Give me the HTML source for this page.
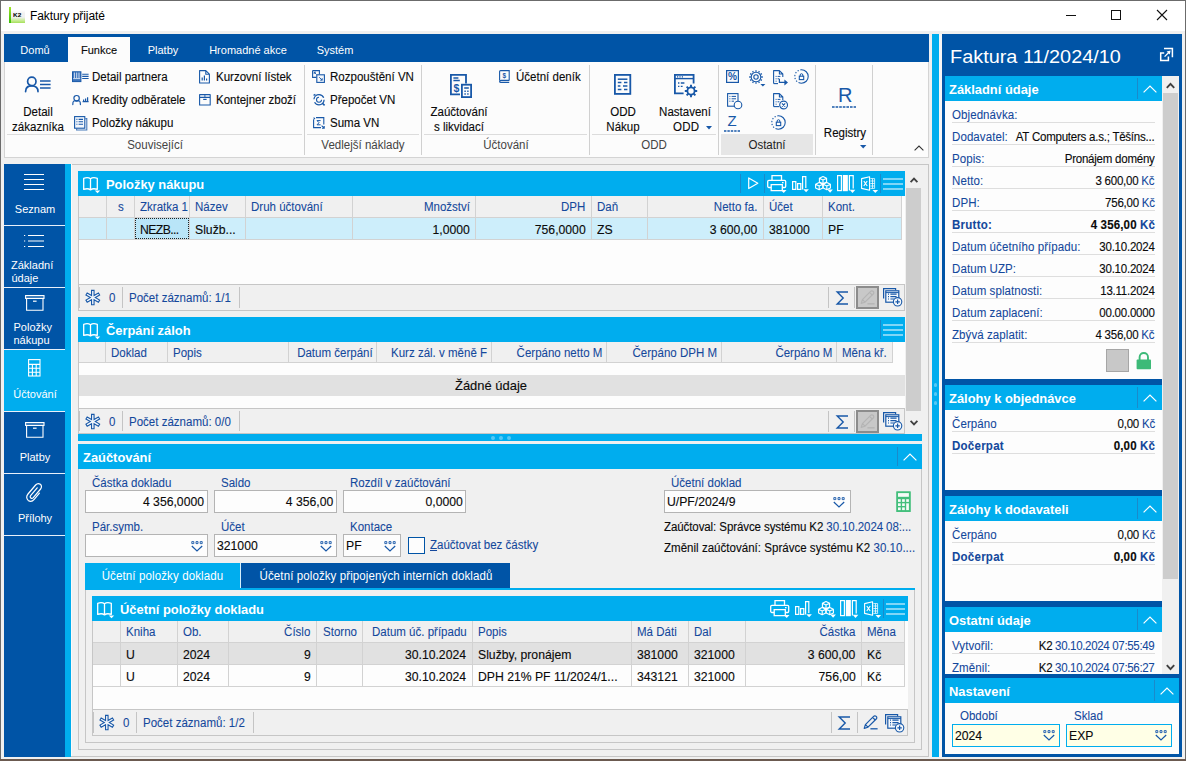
<!DOCTYPE html>
<html lang="cs"><head><meta charset="utf-8"><title>Faktury přijaté</title>
<style>
html,body{margin:0;padding:0;}
body{width:1186px;height:761px;overflow:hidden;background:#f0f0f0;font-family:"Liberation Sans",sans-serif;font-size:12px;color:#111;position:relative;}
div,svg{position:absolute;box-sizing:border-box;}
.t{white-space:nowrap;font-size:12px;transform:scaleX(0.96);transform-origin:left center;}
.t.r{transform-origin:right center;}
.t.c{transform-origin:center center;}
.h12{font-size:12px;}
.t.nv{font-size:11px;transform:none;}
.t.d{font-size:12.4px;transform:scaleX(0.985);}
.t.f{font-size:12.4px;transform:scaleX(0.93);}
.b{color:#14489c;-webkit-text-stroke:0.08px #14489c;}
.w{color:#fff;}
.bold{font-weight:bold;}
.hd{font-size:13.5px;font-weight:bold;color:#fff;transform:scaleX(0.955);margin-top:0.5px;}
.k{color:#0a0a0a;-webkit-text-stroke:0.12px #0a0a0a;}
svg{overflow:visible;}
</style></head><body>
<div style="left:0px;top:0px;width:1186px;height:761px;background:#f0f0f0;"></div>
<div style="left:0px;top:0px;width:1186px;height:1px;background:#6b6b6b;"></div>
<div style="left:0px;top:0px;width:1px;height:761px;background:#6b6b6b;"></div>
<div style="left:1185px;top:0px;width:1px;height:761px;background:#6b6b6b;"></div>
<div style="left:0px;top:759px;width:1186px;height:2px;background:#6b5a50;"></div>
<div style="left:1px;top:1px;width:1184px;height:30px;background:#ffffff;"></div>
<div style="left:11px;top:10px;width:14px;height:13px;background:linear-gradient(180deg,rgba(244,244,244,0) 0%,#f2f2f2 25%,#f0f0f0 55%,#c9ec98 80%,#a6e05a 100%);"></div>
<div style="left:9px;top:7px;width:2.2px;height:16px;background:linear-gradient(180deg,#a2e42c 0%,#62cc14 60%,#3abc0c 100%);"></div>
<div class="t " style="top:11.1px;height:8px;line-height:8px;left:12.7px;font-size:5.5px;font-weight:bold;color:#000;transform:scaleX(1.17);">K2</div>
<div class="t " style="top:7px;height:18px;line-height:18px;left:30px;color:#000;font-size:12px;transform:none;letter-spacing:-0.08px;">Faktury přijaté</div>
<svg style="left:1066px;top:10px;" width="11" height="11" viewBox="0 0 11 11"><path d="M0 5.5H10" stroke="#111" stroke-width="1" fill="none"/></svg>
<svg style="left:1111px;top:10px;" width="11" height="11" viewBox="0 0 11 11"><rect x="0.5" y="0.5" width="9" height="9" stroke="#111" stroke-width="1" fill="none"/></svg>
<svg style="left:1157px;top:10px;" width="11" height="11" viewBox="0 0 11 11"><path d="M0 0L10 10M10 0L0 10" stroke="#111" stroke-width="1.1" fill="none"/></svg>
<div style="left:4px;top:34px;width:925px;height:28px;background:#0054a6;"></div>
<div style="left:68px;top:37px;width:62px;height:25px;background:#fcfcfc;"></div>
<div class="t c w nv" style="top:38px;height:24px;line-height:24px;left:5.0px;width:60px;text-align:center;">Domů</div>
<div class="t c k nv" style="top:38px;height:24px;line-height:24px;left:69.0px;width:60px;text-align:center;">Funkce</div>
<div class="t c w nv" style="top:38px;height:24px;line-height:24px;left:133.0px;width:60px;text-align:center;">Platby</div>
<div class="t c w nv" style="top:38px;height:24px;line-height:24px;left:188.0px;width:120px;text-align:center;">Hromadné akce</div>
<div class="t c w nv" style="top:38px;height:24px;line-height:24px;left:305.0px;width:60px;text-align:center;">Systém</div>
<div style="left:4px;top:62px;width:925px;height:96px;background:#fcfcfc;border:1px solid #d4d4d4;border-top:none;"></div>
<div class="t c k" style="top:104px;height:16px;line-height:16px;left:-7.0px;width:90px;text-align:center;">Detail</div>
<div class="t c k" style="top:118.5px;height:16px;line-height:16px;left:-7.0px;width:90px;text-align:center;">zákazníka</div>
<div class="t k" style="top:66px;height:22px;line-height:22px;left:92px;">Detail partnera</div>
<div class="t k" style="top:89px;height:22px;line-height:22px;left:92px;">Kredity odběratele</div>
<div class="t k" style="top:112px;height:22px;line-height:22px;left:92px;">Položky nákupu</div>
<div class="t k" style="top:66px;height:22px;line-height:22px;left:216px;">Kurzovní lístek</div>
<div class="t k" style="top:89px;height:22px;line-height:22px;left:216px;">Kontejner zboží</div>
<div style="left:7px;top:134px;width:295px;height:1px;background:#dcdcdc;"></div>
<div class="t c " style="top:136px;height:18px;line-height:18px;left:84.5px;width:140px;text-align:center;color:#444;">Související</div>
<div style="left:304px;top:65px;width:1px;height:90px;background:#d0d0d0;"></div>
<div class="t k" style="top:66px;height:22px;line-height:22px;left:330px;">Rozpouštění VN</div>
<div class="t k" style="top:89px;height:22px;line-height:22px;left:330px;">Přepočet VN</div>
<div class="t k" style="top:112px;height:22px;line-height:22px;left:330px;">Suma VN</div>
<div style="left:307px;top:134px;width:112px;height:1px;background:#dcdcdc;"></div>
<div class="t c " style="top:136px;height:18px;line-height:18px;left:293.0px;width:140px;text-align:center;color:#444;">Vedlejší náklady</div>
<div style="left:421px;top:65px;width:1px;height:90px;background:#d0d0d0;"></div>
<div class="t c k" style="top:104px;height:16px;line-height:16px;left:413.5px;width:90px;text-align:center;">Zaúčtování</div>
<div class="t c k" style="top:118.5px;height:16px;line-height:16px;left:413.5px;width:90px;text-align:center;">s likvidací</div>
<div class="t k" style="top:66px;height:22px;line-height:22px;left:516px;">Účetní deník</div>
<div style="left:424px;top:134px;width:163px;height:1px;background:#dcdcdc;"></div>
<div class="t c " style="top:136px;height:18px;line-height:18px;left:435.5px;width:140px;text-align:center;color:#444;">Účtování</div>
<div style="left:589px;top:65px;width:1px;height:90px;background:#d0d0d0;"></div>
<div class="t c k" style="top:104px;height:16px;line-height:16px;left:577.5px;width:90px;text-align:center;">ODD</div>
<div class="t c k" style="top:118.5px;height:16px;line-height:16px;left:577.5px;width:90px;text-align:center;">Nákup</div>
<div class="t c k" style="top:104px;height:16px;line-height:16px;left:640.0px;width:90px;text-align:center;">Nastavení</div>
<div class="t c k" style="top:118.5px;height:16px;line-height:16px;left:640.0px;width:90px;text-align:center;"></div>
<div class="t k" style="top:118.5px;height:16px;line-height:16px;left:672.5px;letter-spacing:0.3px;">ODD</div>
<div style="left:592px;top:134px;width:124px;height:1px;background:#dcdcdc;"></div>
<div class="t c " style="top:136px;height:18px;line-height:18px;left:584.0px;width:140px;text-align:center;color:#444;">ODD</div>
<div style="left:718px;top:65px;width:1px;height:90px;background:#d0d0d0;"></div>
<div style="left:721px;top:134px;width:92px;height:21px;background:#e6e6e6;"></div>
<div class="t c " style="top:136px;height:18px;line-height:18px;left:727.0px;width:80px;text-align:center;color:#222;">Ostatní</div>
<div style="left:815px;top:65px;width:1px;height:90px;background:#d0d0d0;"></div>
<div class="t c k" style="top:123.5px;height:18px;line-height:18px;left:804.5px;width:80px;text-align:center;">Registry</div>
<div style="left:872px;top:65px;width:1px;height:90px;background:#d0d0d0;"></div>
<div style="left:4px;top:164px;width:61px;height:593px;background:#0054a6;"></div>
<div style="left:65px;top:164px;width:6px;height:593px;background:#00adee;"></div>
<div style="left:4px;top:350px;width:67px;height:61px;background:#00adee;"></div>
<div style="left:4px;top:225px;width:61px;height:1px;background:#e8f0fa;"></div>
<div style="left:4px;top:287px;width:61px;height:1px;background:#e8f0fa;"></div>
<div style="left:4px;top:349px;width:61px;height:1px;background:#e8f0fa;"></div>
<div style="left:4px;top:411px;width:61px;height:1px;background:#e8f0fa;"></div>
<div style="left:4px;top:473px;width:61px;height:1px;background:#e8f0fa;"></div>
<div style="left:4px;top:535px;width:61px;height:1px;background:#e8f0fa;"></div>
<div class="t c w nv" style="top:201px;height:16px;line-height:16px;left:0.0px;width:70px;text-align:center;">Seznam</div>
<div class="t w nv" style="top:257px;height:16px;line-height:16px;left:11px;">Základní</div>
<div class="t w nv" style="top:270px;height:16px;line-height:16px;left:11.5px;">údaje</div>
<div class="t w nv" style="top:319px;height:16px;line-height:16px;left:13.5px;">Položky</div>
<div class="t w nv" style="top:332px;height:16px;line-height:16px;left:13.5px;">nákupu</div>
<div class="t c w nv" style="top:386px;height:16px;line-height:16px;left:0.0px;width:70px;text-align:center;">Účtování</div>
<div class="t c w nv" style="top:449px;height:16px;line-height:16px;left:0.0px;width:70px;text-align:center;">Platby</div>
<div class="t c w nv" style="top:510px;height:16px;line-height:16px;left:0.0px;width:70px;text-align:center;">Přílohy</div>
<svg style="left:24px;top:174px;" width="20" height="16" viewBox="0 0 20 16"><path d="M0 0.5H20M0 5.5H20M0 10.5H20M0 15.5H20" stroke="#fff" stroke-width="1"/></svg>
<svg style="left:24px;top:235px;" width="20" height="12" viewBox="0 0 20 12"><path d="M4 0.5H20M4 6H20M4 11.5H20" stroke="#fff" stroke-width="1.1"/><path d="M0 0.5H1.2M0 6H1.2M0 11.5H1.2" stroke="#fff" stroke-width="1.2"/></svg>
<svg style="left:24.5px;top:295px;" width="20" height="16" viewBox="0 0 20 16"><path d="M0.6 0.6H19V3.4H0.6ZM1.6 3.4V15.2H18V3.4" fill="none" stroke="#fff" stroke-width="1.1"/><path d="M8 6.2H11.6" stroke="#fff" stroke-width="1.2"/></svg>
<svg style="left:28px;top:359px;" width="13" height="18" viewBox="0 0 13 18"><g fill="none" stroke="#fff" stroke-width="1.1"><rect x="0.6" y="0.6" width="11.4" height="16.4"/><path d="M0.6 5.4H12M0.6 9.3H12M0.6 13.2H12M4.4 5.4V17M8.2 5.4V17"/></g></svg>
<svg style="left:24.5px;top:421.5px;" width="20" height="16" viewBox="0 0 20 16"><path d="M0.6 0.6H19V3.4H0.6ZM1.6 3.4V15.2H18V3.4" fill="none" stroke="#fff" stroke-width="1.1"/><path d="M8 6.2H11.6" stroke="#fff" stroke-width="1.2"/></svg>
<svg style="left:25px;top:483px;" width="18" height="19" viewBox="0 0 18 19"><path d="M12.2 4.8L5.6 12.6C4.8 13.6 5.2 14.6 5.8 15.1C6.5 15.6 7.5 15.6 8.3 14.7L15.6 6C17 4.3 16.6 2.3 15.3 1.3C14 0.3 12 0.4 10.6 2L3 11C1 13.4 1.5 16 3.2 17.4C4.9 18.7 7.4 18.5 9.2 16.4L14.4 10.2" fill="none" stroke="#fff" stroke-width="1.2" stroke-linecap="round"/></svg>
<div style="left:932px;top:34px;width:7px;height:723px;background:#00adee;"></div>
<div style="left:942px;top:34px;width:240px;height:723px;background:#0054a6;"></div>
<div style="left:933.8px;top:383.2px;width:3.6px;height:3.6px;background:#55c8f5;border-radius:2px;"></div>
<div style="left:933.8px;top:392.2px;width:3.6px;height:3.6px;background:#55c8f5;border-radius:2px;"></div>
<div style="left:933.8px;top:401.2px;width:3.6px;height:3.6px;background:#55c8f5;border-radius:2px;"></div>
<div style="left:939px;top:34px;width:3px;height:723px;background:#f8f6f6;"></div>
<div style="left:71px;top:164px;width:858px;height:1px;background:#c6c6c6;"></div>
<div style="left:71px;top:164px;width:1px;height:593px;background:#fafafa;"></div>
<div style="left:928px;top:164px;width:1px;height:593px;background:#c6c6c6;"></div>
<div style="left:71px;top:756px;width:858px;height:1px;background:#c6c6c6;"></div>
<div style="left:78px;top:171px;width:827px;height:25px;background:#00adee;"></div>
<div class="t hd" style="top:171px;height:25px;line-height:25px;left:105.5px;">Položky nákupu</div>
<div style="left:78px;top:196px;width:827px;height:88px;background:#fdfdfd;"></div>
<div style="left:78px;top:196px;width:824px;height:22px;background:#f0f0f0;"></div>
<div style="left:78px;top:217px;width:824px;height:1px;background:#d2d2d2;"></div>
<div style="left:106px;top:196px;width:1px;height:21px;background:#d2d2d2;"></div>
<div style="left:134px;top:196px;width:1px;height:21px;background:#d2d2d2;"></div>
<div class="t c b" style="top:197px;height:21px;line-height:21px;left:107.0px;width:28px;text-align:center;">s</div>
<div style="left:189px;top:196px;width:1px;height:21px;background:#d2d2d2;"></div>
<div class="t b" style="top:197px;height:21px;line-height:21px;left:140px;">Zkratka 1</div>
<div style="left:245px;top:196px;width:1px;height:21px;background:#d2d2d2;"></div>
<div class="t b" style="top:197px;height:21px;line-height:21px;left:195px;">Název</div>
<div style="left:352px;top:196px;width:1px;height:21px;background:#d2d2d2;"></div>
<div class="t b" style="top:197px;height:21px;line-height:21px;left:251px;">Druh účtování</div>
<div style="left:475px;top:196px;width:1px;height:21px;background:#d2d2d2;"></div>
<div class="t r b" style="top:197px;height:21px;line-height:21px;right:716.3px;">Množství</div>
<div style="left:591px;top:196px;width:1px;height:21px;background:#d2d2d2;"></div>
<div class="t r b" style="top:197px;height:21px;line-height:21px;right:600.3px;">DPH</div>
<div style="left:647px;top:196px;width:1px;height:21px;background:#d2d2d2;"></div>
<div class="t b" style="top:197px;height:21px;line-height:21px;left:597px;">Daň</div>
<div style="left:763px;top:196px;width:1px;height:21px;background:#d2d2d2;"></div>
<div class="t r b" style="top:197px;height:21px;line-height:21px;right:428.29999999999995px;">Netto fa.</div>
<div style="left:822px;top:196px;width:1px;height:21px;background:#d2d2d2;"></div>
<div class="t b" style="top:197px;height:21px;line-height:21px;left:769px;">Účet</div>
<div style="left:901px;top:196px;width:1px;height:21px;background:#d2d2d2;"></div>
<div class="t b" style="top:197px;height:21px;line-height:21px;left:828px;">Kont.</div>
<div style="left:78px;top:218px;width:824px;height:22px;background:#cdeefb;"></div>
<div style="left:78px;top:239px;width:824px;height:1px;background:#d2d2d2;"></div>
<div style="left:106px;top:218px;width:1px;height:21px;background:#d2d2d2;"></div>
<div style="left:134px;top:218px;width:1px;height:21px;background:#d2d2d2;"></div>
<div style="left:189px;top:218px;width:1px;height:21px;background:#d2d2d2;"></div>
<div class="t k d" style="top:220px;height:21px;line-height:21px;left:140px;width:49.0px;overflow:hidden;text-overflow:ellipsis;">NEZB...</div>
<div style="left:245px;top:218px;width:1px;height:21px;background:#d2d2d2;"></div>
<div class="t k d" style="top:220px;height:21px;line-height:21px;left:195px;width:50.0px;overflow:hidden;text-overflow:ellipsis;">Služb...</div>
<div style="left:352px;top:218px;width:1px;height:21px;background:#d2d2d2;"></div>
<div style="left:475px;top:218px;width:1px;height:21px;background:#d2d2d2;"></div>
<div class="t r k d" style="top:220px;height:21px;line-height:21px;right:716.5px;">1,0000</div>
<div style="left:591px;top:218px;width:1px;height:21px;background:#d2d2d2;"></div>
<div class="t r k d" style="top:220px;height:21px;line-height:21px;right:600.5px;">756,0000</div>
<div style="left:647px;top:218px;width:1px;height:21px;background:#d2d2d2;"></div>
<div class="t k d" style="top:220px;height:21px;line-height:21px;left:597px;width:50.0px;overflow:hidden;text-overflow:ellipsis;">ZS</div>
<div style="left:763px;top:218px;width:1px;height:21px;background:#d2d2d2;"></div>
<div class="t r k d" style="top:220px;height:21px;line-height:21px;right:428.5px;">3 600,00</div>
<div style="left:822px;top:218px;width:1px;height:21px;background:#d2d2d2;"></div>
<div class="t k d" style="top:220px;height:21px;line-height:21px;left:769px;width:53.0px;overflow:hidden;text-overflow:ellipsis;">381000</div>
<div style="left:901px;top:218px;width:1px;height:21px;background:#d2d2d2;"></div>
<div class="t k d" style="top:220px;height:21px;line-height:21px;left:828px;width:73.0px;overflow:hidden;text-overflow:ellipsis;">PF</div>
<div style="left:135px;top:218px;width:54px;height:21px;background:#b9e5f8;border:1px dotted #222;"></div>
<div class="t k d" style="top:220px;height:21px;line-height:21px;left:140px;letter-spacing:-0.6px;">NEZB...</div>
<div style="left:78px;top:284px;width:827px;height:27px;background:#f0f0f0;border:1px solid #c6c6c6;"></div>
<div style="left:79px;top:287px;width:1px;height:21px;background:#c4c4c4;"></div>
<div style="left:122px;top:287px;width:1px;height:21px;background:#c4c4c4;"></div>
<div style="left:239px;top:287px;width:1px;height:21px;background:#c4c4c4;"></div>
<div class="t b" style="top:284.7px;height:27px;line-height:27px;left:109px;">0</div>
<div class="t b" style="top:284.7px;height:27px;line-height:27px;left:129px;">Počet záznamů: 1/1</div>
<div style="left:78px;top:196px;width:1px;height:88px;background:#c6c6c6;"></div>
<div style="left:906px;top:171px;width:16px;height:263px;background:#f0f0f0;"></div>
<div style="left:906px;top:188px;width:15px;height:223px;background:#cdcdcd;"></div>
<div style="left:78px;top:317px;width:827px;height:25px;background:#00adee;"></div>
<div class="t hd" style="top:317px;height:25px;line-height:25px;left:105.5px;">Čerpání záloh</div>
<div style="left:78px;top:342px;width:827px;height:66px;background:#fdfdfd;"></div>
<div style="left:78px;top:342px;width:815px;height:21px;background:#f0f0f0;"></div>
<div style="left:78px;top:362px;width:815px;height:1px;background:#d2d2d2;"></div>
<div style="left:105px;top:342px;width:1px;height:20px;background:#d2d2d2;"></div>
<div style="left:167px;top:342px;width:1px;height:20px;background:#d2d2d2;"></div>
<div class="t b" style="top:343px;height:20px;line-height:20px;left:111px;">Doklad</div>
<div style="left:288px;top:342px;width:1px;height:20px;background:#d2d2d2;"></div>
<div class="t b" style="top:343px;height:20px;line-height:20px;left:173px;">Popis</div>
<div style="left:376px;top:342px;width:1px;height:20px;background:#d2d2d2;"></div>
<div class="t r b" style="top:343px;height:20px;line-height:20px;right:813.8px;">Datum čerpání</div>
<div style="left:491px;top:342px;width:1px;height:20px;background:#d2d2d2;"></div>
<div class="t r b" style="top:343px;height:20px;line-height:20px;right:698.8px;">Kurz zál. v měně F</div>
<div style="left:606px;top:342px;width:1px;height:20px;background:#d2d2d2;"></div>
<div class="t r b" style="top:343px;height:20px;line-height:20px;right:583.8px;">Čerpáno netto M</div>
<div style="left:721px;top:342px;width:1px;height:20px;background:#d2d2d2;"></div>
<div class="t r b" style="top:343px;height:20px;line-height:20px;right:468.79999999999995px;">Čerpáno DPH M</div>
<div style="left:836px;top:342px;width:1px;height:20px;background:#d2d2d2;"></div>
<div class="t r b" style="top:343px;height:20px;line-height:20px;right:353.79999999999995px;">Čerpáno M</div>
<div style="left:892px;top:342px;width:1px;height:20px;background:#d2d2d2;"></div>
<div class="t b" style="top:343px;height:20px;line-height:20px;left:842px;">Měna kř.</div>
<div style="left:78px;top:375px;width:827px;height:21px;background:#e1e1e1;"></div>
<div class="t c k" style="top:375px;height:21px;line-height:21px;left:391.0px;width:200px;text-align:center;font-size:13.5px;">Žádné údaje</div>
<div style="left:78px;top:408px;width:827px;height:26px;background:#f0f0f0;border:1px solid #c6c6c6;"></div>
<div style="left:79px;top:411px;width:1px;height:20px;background:#c4c4c4;"></div>
<div style="left:122px;top:411px;width:1px;height:20px;background:#c4c4c4;"></div>
<div style="left:239px;top:411px;width:1px;height:20px;background:#c4c4c4;"></div>
<div class="t b" style="top:408.7px;height:26px;line-height:26px;left:109px;">0</div>
<div class="t b" style="top:408.7px;height:26px;line-height:26px;left:129px;">Počet záznamů: 0/0</div>
<div style="left:78px;top:342px;width:1px;height:66px;background:#c6c6c6;"></div>
<div style="left:78px;top:434px;width:844px;height:7px;background:#00adee;"></div>
<div style="left:491px;top:436px;width:3.6px;height:3.6px;background:#55c8f5;border-radius:2px;"></div>
<div style="left:499px;top:436px;width:3.6px;height:3.6px;background:#55c8f5;border-radius:2px;"></div>
<div style="left:507px;top:436px;width:3.6px;height:3.6px;background:#55c8f5;border-radius:2px;"></div>
<div style="left:78px;top:444px;width:844px;height:25px;background:#00adee;"></div>
<div class="t hd" style="top:444px;height:25px;line-height:25px;left:83px;">Zaúčtování</div>
<div style="left:897px;top:447px;width:1px;height:19px;background:#1a8acb;"></div>
<div style="left:78px;top:469px;width:1px;height:281px;background:#c6c6c6;"></div>
<div style="left:921px;top:469px;width:1px;height:281px;background:#c6c6c6;"></div>
<div style="left:78px;top:749px;width:844px;height:1px;background:#c6c6c6;"></div>
<div class="t b" style="top:474.7px;height:16px;line-height:16px;left:92px;">Částka dokladu</div>
<div style="left:85px;top:490px;width:123px;height:23px;background:#fdfdfd;border:1px solid #b4b4b4;"></div>
<div class="t r k d" style="top:491.4px;height:23px;line-height:23px;right:981.5px;">4 356,0000</div>
<div class="t b" style="top:474.7px;height:16px;line-height:16px;left:221px;">Saldo</div>
<div style="left:214px;top:490px;width:123px;height:23px;background:#fdfdfd;border:1px solid #b4b4b4;"></div>
<div class="t r k d" style="top:491.4px;height:23px;line-height:23px;right:852.5px;">4 356,00</div>
<div class="t b" style="top:474.7px;height:16px;line-height:16px;left:350px;">Rozdíl v zaúčtování</div>
<div style="left:343px;top:490px;width:123px;height:23px;background:#fdfdfd;border:1px solid #b4b4b4;"></div>
<div class="t r k d" style="top:491.4px;height:23px;line-height:23px;right:723.5px;">0,0000</div>
<div class="t b" style="top:518.7px;height:16px;line-height:16px;left:92px;">Pár.symb.</div>
<div style="left:85px;top:534px;width:123px;height:23px;background:#fdfdfd;border:1px solid #b4b4b4;"></div>
<div class="t b" style="top:518.7px;height:16px;line-height:16px;left:221px;">Účet</div>
<div style="left:214px;top:534px;width:123px;height:23px;background:#fdfdfd;border:1px solid #b4b4b4;"></div>
<div class="t k d" style="top:535.4px;height:23px;line-height:23px;left:217px;">321000</div>
<div class="t b" style="top:518.7px;height:16px;line-height:16px;left:350px;">Kontace</div>
<div style="left:343px;top:534px;width:58px;height:23px;background:#fdfdfd;border:1px solid #b4b4b4;"></div>
<div class="t k d" style="top:535.4px;height:23px;line-height:23px;left:346px;">PF</div>
<div style="left:408px;top:537px;width:17px;height:17px;background:#fdfdfd;border:1px solid #0054a6;"></div>
<div class="t b" style="top:537px;height:17px;line-height:17px;left:430px;"><u>Z</u>aúčtovat bez částky</div>
<div class="t b" style="top:474.7px;height:16px;line-height:16px;left:671px;">Účetní doklad</div>
<div style="left:664px;top:490px;width:187px;height:23px;background:#fdfdfd;border:1px solid #b4b4b4;"></div>
<div class="t k d" style="top:491.4px;height:23px;line-height:23px;left:667px;">U/PF/2024/9</div>
<div class="t k" style="top:518px;height:18px;line-height:18px;left:664px;letter-spacing:-0.1px;">Zaúčtoval: Správce systému K2 <span class="b">30.10.2024 08:...</span></div>
<div class="t k" style="top:539px;height:18px;line-height:18px;left:664px;letter-spacing:0.02px;">Změnil zaúčtování: Správce systému K2 <span class="b">30.10....</span></div>
<div style="left:85px;top:563px;width:155px;height:27px;background:#00adee;"></div>
<div style="left:240px;top:563px;width:270px;height:25px;background:#0054a6;"></div>
<div style="left:85px;top:588px;width:830px;height:2px;background:#00adee;"></div>
<div class="t c w" style="top:564px;height:25px;line-height:25px;left:85.0px;width:155px;text-align:center;letter-spacing:0.12px;">Účetní položky dokladu</div>
<div class="t c w" style="top:564px;height:25px;line-height:25px;left:240.5px;width:270px;text-align:center;letter-spacing:0.1px;">Účetní položky připojených interních dokladů</div>
<div style="left:240px;top:563px;width:1px;height:25px;background:#d4effc;"></div>
<div style="left:85px;top:590px;width:1px;height:153px;background:#c6c6c6;"></div>
<div style="left:914px;top:590px;width:1px;height:153px;background:#c6c6c6;"></div>
<div style="left:85px;top:742px;width:830px;height:1px;background:#c6c6c6;"></div>
<div style="left:92px;top:596px;width:816px;height:25px;background:#00adee;"></div>
<div class="t hd" style="top:596px;height:25px;line-height:25px;left:119.5px;">Účetní položky dokladu</div>
<div style="left:92px;top:621px;width:816px;height:88px;background:#fdfdfd;"></div>
<div style="left:92px;top:621px;width:813px;height:22px;background:#f0f0f0;"></div>
<div style="left:92px;top:642px;width:813px;height:1px;background:#d2d2d2;"></div>
<div style="left:120px;top:621px;width:1px;height:21px;background:#d2d2d2;"></div>
<div style="left:177px;top:621px;width:1px;height:21px;background:#d2d2d2;"></div>
<div class="t b" style="top:622px;height:21px;line-height:21px;left:126px;">Kniha</div>
<div style="left:228px;top:621px;width:1px;height:21px;background:#d2d2d2;"></div>
<div class="t b" style="top:622px;height:21px;line-height:21px;left:183px;">Ob.</div>
<div style="left:316px;top:621px;width:1px;height:21px;background:#d2d2d2;"></div>
<div class="t r b" style="top:622px;height:21px;line-height:21px;right:875.3px;">Číslo</div>
<div style="left:362px;top:621px;width:1px;height:21px;background:#d2d2d2;"></div>
<div class="t c b" style="top:622px;height:21px;line-height:21px;left:317.0px;width:46px;text-align:center;">Storno</div>
<div style="left:472px;top:621px;width:1px;height:21px;background:#d2d2d2;"></div>
<div class="t r b" style="top:622px;height:21px;line-height:21px;right:719.3px;">Datum úč. případu</div>
<div style="left:631px;top:621px;width:1px;height:21px;background:#d2d2d2;"></div>
<div class="t b" style="top:622px;height:21px;line-height:21px;left:478px;">Popis</div>
<div style="left:688px;top:621px;width:1px;height:21px;background:#d2d2d2;"></div>
<div class="t b" style="top:622px;height:21px;line-height:21px;left:637px;">Má Dáti</div>
<div style="left:745px;top:621px;width:1px;height:21px;background:#d2d2d2;"></div>
<div class="t b" style="top:622px;height:21px;line-height:21px;left:694px;">Dal</div>
<div style="left:861px;top:621px;width:1px;height:21px;background:#d2d2d2;"></div>
<div class="t r b" style="top:622px;height:21px;line-height:21px;right:330.29999999999995px;">Částka</div>
<div style="left:904px;top:621px;width:1px;height:21px;background:#d2d2d2;"></div>
<div class="t b" style="top:622px;height:21px;line-height:21px;left:867px;">Měna</div>
<div style="left:92px;top:643px;width:813px;height:22px;background:#e1e1e1;"></div>
<div style="left:92px;top:664px;width:813px;height:1px;background:#d2d2d2;"></div>
<div style="left:120px;top:643px;width:1px;height:21px;background:#d2d2d2;"></div>
<div style="left:177px;top:643px;width:1px;height:21px;background:#d2d2d2;"></div>
<div class="t k d" style="top:645px;height:21px;line-height:21px;left:126px;width:51.0px;overflow:hidden;text-overflow:ellipsis;">U</div>
<div style="left:228px;top:643px;width:1px;height:21px;background:#d2d2d2;"></div>
<div class="t k d" style="top:645px;height:21px;line-height:21px;left:183px;width:45.0px;overflow:hidden;text-overflow:ellipsis;">2024</div>
<div style="left:316px;top:643px;width:1px;height:21px;background:#d2d2d2;"></div>
<div class="t r k d" style="top:645px;height:21px;line-height:21px;right:875.5px;">9</div>
<div style="left:362px;top:643px;width:1px;height:21px;background:#d2d2d2;"></div>
<div style="left:472px;top:643px;width:1px;height:21px;background:#d2d2d2;"></div>
<div class="t r k d" style="top:645px;height:21px;line-height:21px;right:719.5px;">30.10.2024</div>
<div style="left:631px;top:643px;width:1px;height:21px;background:#d2d2d2;"></div>
<div class="t k d" style="top:645px;height:21px;line-height:21px;left:478px;width:153.0px;overflow:hidden;text-overflow:ellipsis;">Služby, pronájem</div>
<div style="left:688px;top:643px;width:1px;height:21px;background:#d2d2d2;"></div>
<div class="t k d" style="top:645px;height:21px;line-height:21px;left:637px;width:51.0px;overflow:hidden;text-overflow:ellipsis;">381000</div>
<div style="left:745px;top:643px;width:1px;height:21px;background:#d2d2d2;"></div>
<div class="t k d" style="top:645px;height:21px;line-height:21px;left:694px;width:51.0px;overflow:hidden;text-overflow:ellipsis;">321000</div>
<div style="left:861px;top:643px;width:1px;height:21px;background:#d2d2d2;"></div>
<div class="t r k d" style="top:645px;height:21px;line-height:21px;right:330.5px;">3 600,00</div>
<div style="left:904px;top:643px;width:1px;height:21px;background:#d2d2d2;"></div>
<div class="t k d" style="top:645px;height:21px;line-height:21px;left:867px;width:37.0px;overflow:hidden;text-overflow:ellipsis;">Kč</div>
<div style="left:92px;top:665px;width:813px;height:22px;background:#fdfdfd;"></div>
<div style="left:92px;top:686px;width:813px;height:1px;background:#d2d2d2;"></div>
<div style="left:120px;top:665px;width:1px;height:21px;background:#d2d2d2;"></div>
<div style="left:177px;top:665px;width:1px;height:21px;background:#d2d2d2;"></div>
<div class="t k d" style="top:667px;height:21px;line-height:21px;left:126px;width:51.0px;overflow:hidden;text-overflow:ellipsis;">U</div>
<div style="left:228px;top:665px;width:1px;height:21px;background:#d2d2d2;"></div>
<div class="t k d" style="top:667px;height:21px;line-height:21px;left:183px;width:45.0px;overflow:hidden;text-overflow:ellipsis;">2024</div>
<div style="left:316px;top:665px;width:1px;height:21px;background:#d2d2d2;"></div>
<div class="t r k d" style="top:667px;height:21px;line-height:21px;right:875.5px;">9</div>
<div style="left:362px;top:665px;width:1px;height:21px;background:#d2d2d2;"></div>
<div style="left:472px;top:665px;width:1px;height:21px;background:#d2d2d2;"></div>
<div class="t r k d" style="top:667px;height:21px;line-height:21px;right:719.5px;">30.10.2024</div>
<div style="left:631px;top:665px;width:1px;height:21px;background:#d2d2d2;"></div>
<div class="t k d" style="top:667px;height:21px;line-height:21px;left:478px;width:153.0px;overflow:hidden;text-overflow:ellipsis;">DPH 21% PF 11/2024/1...</div>
<div style="left:688px;top:665px;width:1px;height:21px;background:#d2d2d2;"></div>
<div class="t k d" style="top:667px;height:21px;line-height:21px;left:637px;width:51.0px;overflow:hidden;text-overflow:ellipsis;">343121</div>
<div style="left:745px;top:665px;width:1px;height:21px;background:#d2d2d2;"></div>
<div class="t k d" style="top:667px;height:21px;line-height:21px;left:694px;width:51.0px;overflow:hidden;text-overflow:ellipsis;">321000</div>
<div style="left:861px;top:665px;width:1px;height:21px;background:#d2d2d2;"></div>
<div class="t r k d" style="top:667px;height:21px;line-height:21px;right:330.5px;">756,00</div>
<div style="left:904px;top:665px;width:1px;height:21px;background:#d2d2d2;"></div>
<div class="t k d" style="top:667px;height:21px;line-height:21px;left:867px;width:37.0px;overflow:hidden;text-overflow:ellipsis;">Kč</div>
<div style="left:92px;top:709px;width:816px;height:27px;background:#f0f0f0;border:1px solid #c6c6c6;"></div>
<div style="left:93px;top:712px;width:1px;height:21px;background:#c4c4c4;"></div>
<div style="left:136px;top:712px;width:1px;height:21px;background:#c4c4c4;"></div>
<div style="left:253px;top:712px;width:1px;height:21px;background:#c4c4c4;"></div>
<div class="t b" style="top:709.7px;height:27px;line-height:27px;left:123px;">0</div>
<div class="t b" style="top:709.7px;height:27px;line-height:27px;left:143px;">Počet záznamů: 1/2</div>
<div style="left:92px;top:621px;width:1px;height:88px;background:#c6c6c6;"></div>
<div class="t w" style="top:43.4px;height:28px;line-height:28px;left:949.5px;font-size:18.3px;transform:scaleX(1.087);">Faktura 11/2024/10</div>
<div style="left:945px;top:76px;width:217px;height:25px;background:#00adee;"></div>
<div class="t hd" style="top:76px;height:25px;line-height:25px;left:949px;">Základní údaje</div>
<div style="left:1137px;top:78px;width:1px;height:21px;background:#1a8acb;"></div>
<div style="left:945px;top:101px;width:217px;height:278px;background:#fdfdfd;"></div>
<div class="t b" style="top:103.8px;height:22px;line-height:22px;left:952.4px;letter-spacing:0.08px;">Objednávka:</div>
<div style="left:952px;top:122px;width:203px;height:1px;background:#dedede;"></div>
<div class="t b" style="top:125.8px;height:22px;line-height:22px;left:952.4px;letter-spacing:0.08px;">Dodavatel:</div>
<div class="t r k" style="top:125.8px;height:22px;line-height:22px;right:31.40000000000009px;letter-spacing:-0.25px;">AT Computers a.s.; Těšíns...</div>
<div style="left:952px;top:144px;width:203px;height:1px;background:#dedede;"></div>
<div class="t b" style="top:147.8px;height:22px;line-height:22px;left:952.4px;letter-spacing:0.08px;">Popis:</div>
<div class="t r k" style="top:147.8px;height:22px;line-height:22px;right:31.40000000000009px;letter-spacing:-0.25px;">Pronájem domény</div>
<div style="left:952px;top:166px;width:203px;height:1px;background:#dedede;"></div>
<div class="t b" style="top:169.8px;height:22px;line-height:22px;left:952.4px;letter-spacing:0.08px;">Netto:</div>
<div class="t r k" style="top:169.8px;height:22px;line-height:22px;right:31.40000000000009px;letter-spacing:-0.25px;">3 600,00 <span class="b">Kč</span></div>
<div style="left:952px;top:188px;width:203px;height:1px;background:#dedede;"></div>
<div class="t b" style="top:191.8px;height:22px;line-height:22px;left:952.4px;letter-spacing:0.08px;">DPH:</div>
<div class="t r k" style="top:191.8px;height:22px;line-height:22px;right:31.40000000000009px;letter-spacing:-0.25px;">756,00 <span class="b">Kč</span></div>
<div style="left:952px;top:210px;width:203px;height:1px;background:#dedede;"></div>
<div class="t b bold" style="top:213.8px;height:22px;line-height:22px;left:952.4px;letter-spacing:0.25px;">Brutto:</div>
<div class="t r k bold" style="top:213.8px;height:22px;line-height:22px;right:31.40000000000009px;letter-spacing:0.15px;">4 356,00 <span class="b">Kč</span></div>
<div style="left:952px;top:232px;width:203px;height:1px;background:#dedede;"></div>
<div class="t b" style="top:235.8px;height:22px;line-height:22px;left:952.4px;letter-spacing:0.08px;">Datum účetního případu:</div>
<div class="t r k" style="top:235.8px;height:22px;line-height:22px;right:31.40000000000009px;letter-spacing:-0.25px;">30.10.2024</div>
<div style="left:952px;top:254px;width:203px;height:1px;background:#dedede;"></div>
<div class="t b" style="top:257.8px;height:22px;line-height:22px;left:952.4px;letter-spacing:0.08px;">Datum UZP:</div>
<div class="t r k" style="top:257.8px;height:22px;line-height:22px;right:31.40000000000009px;letter-spacing:-0.25px;">30.10.2024</div>
<div style="left:952px;top:276px;width:203px;height:1px;background:#dedede;"></div>
<div class="t b" style="top:279.8px;height:22px;line-height:22px;left:952.4px;letter-spacing:0.08px;">Datum splatnosti:</div>
<div class="t r k" style="top:279.8px;height:22px;line-height:22px;right:31.40000000000009px;letter-spacing:-0.25px;">13.11.2024</div>
<div style="left:952px;top:298px;width:203px;height:1px;background:#dedede;"></div>
<div class="t b" style="top:301.8px;height:22px;line-height:22px;left:952.4px;letter-spacing:0.08px;">Datum zaplacení:</div>
<div class="t r k" style="top:301.8px;height:22px;line-height:22px;right:31.40000000000009px;letter-spacing:-0.25px;">00.00.0000</div>
<div style="left:952px;top:320px;width:203px;height:1px;background:#dedede;"></div>
<div class="t b" style="top:323.8px;height:22px;line-height:22px;left:952.4px;letter-spacing:0.08px;">Zbývá zaplatit:</div>
<div class="t r k" style="top:323.8px;height:22px;line-height:22px;right:31.40000000000009px;letter-spacing:-0.25px;">4 356,00 <span class="b">Kč</span></div>
<div style="left:952px;top:342px;width:203px;height:1px;background:#dedede;"></div>
<div style="left:1106px;top:349px;width:23px;height:23px;background:#c8c8c8;border:1px solid #a6a6a6;"></div>
<div style="left:945px;top:385px;width:217px;height:25px;background:#00adee;"></div>
<div class="t hd" style="top:385px;height:25px;line-height:25px;left:949px;">Zálohy k objednávce</div>
<div style="left:1137px;top:387px;width:1px;height:21px;background:#1a8acb;"></div>
<div style="left:945px;top:410px;width:217px;height:80px;background:#fdfdfd;"></div>
<div class="t b" style="top:412.8px;height:22px;line-height:22px;left:952.4px;letter-spacing:0.08px;">Čerpáno</div>
<div class="t r k" style="top:412.8px;height:22px;line-height:22px;right:31.40000000000009px;letter-spacing:-0.25px;">0,00 <span class="b">Kč</span></div>
<div style="left:952px;top:431px;width:203px;height:1px;background:#dedede;"></div>
<div class="t b bold" style="top:434.8px;height:22px;line-height:22px;left:952.4px;letter-spacing:0.25px;">Dočerpat</div>
<div class="t r k bold" style="top:434.8px;height:22px;line-height:22px;right:31.40000000000009px;letter-spacing:0.15px;">0,00 <span class="b">Kč</span></div>
<div style="left:952px;top:453px;width:203px;height:1px;background:#dedede;"></div>
<div style="left:945px;top:496px;width:217px;height:25px;background:#00adee;"></div>
<div class="t hd" style="top:496px;height:25px;line-height:25px;left:949px;">Zálohy k dodavateli</div>
<div style="left:1137px;top:498px;width:1px;height:21px;background:#1a8acb;"></div>
<div style="left:945px;top:521px;width:217px;height:80px;background:#fdfdfd;"></div>
<div class="t b" style="top:523.8px;height:22px;line-height:22px;left:952.4px;letter-spacing:0.08px;">Čerpáno</div>
<div class="t r k" style="top:523.8px;height:22px;line-height:22px;right:31.40000000000009px;letter-spacing:-0.25px;">0,00 <span class="b">Kč</span></div>
<div style="left:952px;top:542px;width:203px;height:1px;background:#dedede;"></div>
<div class="t b bold" style="top:545.8px;height:22px;line-height:22px;left:952.4px;letter-spacing:0.25px;">Dočerpat</div>
<div class="t r k bold" style="top:545.8px;height:22px;line-height:22px;right:31.40000000000009px;letter-spacing:0.15px;">0,00 <span class="b">Kč</span></div>
<div style="left:952px;top:564px;width:203px;height:1px;background:#dedede;"></div>
<div style="left:945px;top:607px;width:217px;height:25px;background:#00adee;"></div>
<div class="t hd" style="top:607px;height:25px;line-height:25px;left:949px;">Ostatní údaje</div>
<div style="left:1137px;top:609px;width:1px;height:21px;background:#1a8acb;"></div>
<div style="left:945px;top:632px;width:217px;height:42px;background:#fdfdfd;"></div>
<div class="t b" style="top:634.8px;height:22px;line-height:22px;left:952.4px;letter-spacing:0.08px;">Vytvořil:</div>
<div class="t r k" style="top:634.8px;height:22px;line-height:22px;right:31.40000000000009px;letter-spacing:-0.25px;"><span style="letter-spacing:-0.35px">K2 <span class="b">30.10.2024 07:55:49</span></span></div>
<div style="left:952px;top:653px;width:203px;height:1px;background:#dedede;"></div>
<div class="t b" style="top:656.8px;height:22px;line-height:22px;left:952.4px;letter-spacing:0.08px;">Změnil:</div>
<div class="t r k" style="top:656.8px;height:22px;line-height:22px;right:31.40000000000009px;letter-spacing:-0.25px;"><span style="letter-spacing:-0.35px">K2 <span class="b">30.10.2024 07:56:27</span></span></div>
<div style="left:1162px;top:76px;width:17px;height:598px;background:#f0f0f0;"></div>
<div style="left:1163px;top:93px;width:15px;height:486px;background:#cdcdcd;"></div>
<div style="left:945px;top:678px;width:234px;height:25px;background:#00adee;"></div>
<div class="t hd" style="top:678px;height:25px;line-height:25px;left:949px;">Nastavení</div>
<div style="left:1154px;top:680px;width:1px;height:21px;background:#1a8acb;"></div>
<div style="left:945px;top:703px;width:234px;height:51px;background:#fcfcfc;"></div>
<div class="t b" style="top:708px;height:16px;line-height:16px;left:960px;">Období</div>
<div class="t b" style="top:708px;height:16px;line-height:16px;left:1073.5px;">Sklad</div>
<div style="left:952px;top:724px;width:108px;height:23px;background:#ffffe6;border:1px solid #00adee;"></div>
<div class="t k d" style="top:725.4px;height:23px;line-height:23px;left:955px;">2024</div>
<div style="left:1066px;top:724px;width:106px;height:23px;background:#ffffe6;border:1px solid #00adee;"></div>
<div class="t k d" style="top:725.4px;height:23px;line-height:23px;left:1069px;">EXP</div>
<svg style="left:83px;top:177px;" width="18" height="17" viewBox="0 0 18 17"><path d="M7.5 1.8C6 0.6 3 0.5 0.7 1.3V12.4C3 11.6 6 11.7 7.5 12.9C9 11.7 12 11.6 14.3 12.4V1.3C12 0.5 9 0.6 7.5 1.8ZM7.5 1.8V12.9" fill="none" stroke="#ffffff" stroke-width="1.3" stroke-linejoin="round"/><path d="M11.8 13.6H17.2L14.5 16.3Z" fill="#ffffff"/></svg>
<div style="left:740px;top:174px;width:1px;height:19px;background:#1a8acb;"></div>
<svg style="left:748px;top:177px;" width="11" height="13" viewBox="0 0 11 13"><path d="M0.7 0.9L9.8 6.2L0.7 11.5Z" fill="none" stroke="#ffffff" stroke-width="1.2" stroke-linejoin="round"/></svg>
<div style="left:764px;top:174px;width:1px;height:19px;background:#1a8acb;"></div>
<svg style="left:767px;top:175px;" width="20" height="18" viewBox="0 0 20 18"><g fill="none" stroke="#ffffff" stroke-width="1.3"><path d="M5 5.3V0.7H14.5V5.3"/><rect x="0.7" y="5.3" width="18" height="7.2" rx="1.2"/><path d="M4.2 9.6H15.3V15.6H4.2Z" fill="#00adee"/></g><rect x="15" y="7" width="1.6" height="1.3" fill="#ffffff"/><path d="M13.9 14.9H19.5L16.7 18Z" fill="#ffffff"/></svg>
<svg style="left:792px;top:176px;" width="18" height="16" viewBox="0 0 18 16"><g fill="none" stroke="#ffffff" stroke-width="1.2"><rect x="0.6" y="5.6" width="3.2" height="7.8"/><rect x="5.6" y="7.6" width="3.2" height="5.8"/><path d="M10.6 13.4V0.6H13.8V12"/></g><path d="M11.3 13.2H16.9L14.1 16.3Z" fill="#ffffff"/></svg>
<svg style="left:815px;top:176px;" width="18" height="16" viewBox="0 0 18 16"><g fill="none" stroke="#ffffff" stroke-width="1.1" stroke-linejoin="round"><path d="M8 0.6L11.6 2.3V6L8 7.7L4.4 6V2.3ZM4.4 2.3L8 4L11.6 2.3M8 4V7.7"/><path d="M4.2 6.6L7.8 8.3V12L4.2 13.7L0.6 12V8.3ZM0.6 8.3L4.2 10L7.8 8.3M4.2 10V13.7"/><path d="M11.8 6.6L15.4 8.3V12L11.8 13.7L8.2 12V8.3ZM8.2 8.3L11.8 10L15.4 8.3M11.8 10V13.7"/></g><path d="M12.3 13.6H17.9L15.1 16.7Z" fill="#ffffff"/></svg>
<svg style="left:837px;top:175px;" width="19" height="18" viewBox="0 0 19 18"><g fill="none" stroke="#ffffff" stroke-width="1.2"><rect x="0.6" y="0.6" width="3.8" height="15"/><rect x="6.4" y="0.6" width="3.8" height="15" fill="#ffffff"/><path d="M12.4 15.6V0.6H16.2V13.6"/></g><path d="M12.7 14.8H18.3L15.5 17.9Z" fill="#ffffff"/></svg>
<svg style="left:861px;top:176px;" width="18" height="17" viewBox="0 0 18 17"><path d="M0.6 2.6L8.6 0.8V14.2L0.6 12.4Z" fill="none" stroke="#ffffff" stroke-width="1.1" stroke-linejoin="round"/><path d="M2.8 5L6.2 10M6.2 5L2.8 10" stroke="#ffffff" stroke-width="1.1"/><path d="M9.4 2.6H13.6V12.4H9.4M9.4 5H13.6M9.4 7.5H13.6M9.4 10H13.6M11.5 2.6V12.4" fill="none" stroke="#ffffff" stroke-width="0.9" opacity="0.85"/><path d="M11.5 14H17.1L14.3 17.1Z" fill="#ffffff"/></svg>
<div style="left:880px;top:174px;width:1px;height:19px;background:#1a8acb;"></div>
<svg style="left:883px;top:177.6px;" width="20" height="12" viewBox="0 0 20 12"><path d="M0 1H20M0 6H20M0 11H20" stroke="#ffffff" stroke-width="1.15"/></svg>
<svg style="left:85px;top:290px;" width="16" height="16" viewBox="0 0 16 16"><path d="M6.55 5.43L6.55 0.40L9.05 0.40L9.05 5.43L13.41 2.92L14.66 5.08L10.30 7.60L14.66 10.12L13.41 12.28L9.05 9.77L9.05 14.80L6.55 14.80L6.55 9.77L2.19 12.28L0.94 10.12L5.30 7.60L0.94 5.08L2.19 2.92Z" fill="#f4f8fc" stroke="#1858a8" stroke-width="1.1" stroke-linejoin="miter"/></svg>
<div style="left:828px;top:287px;width:1px;height:21px;background:#c4c4c4;"></div>
<svg style="left:836px;top:291px;" width="13" height="14" viewBox="0 0 13 14"><path d="M12 1H1.2L7.2 7L1.2 13H12" fill="none" stroke="#1858a8" stroke-width="1.4" stroke-linejoin="miter"/></svg>
<div style="left:854px;top:287px;width:1px;height:21px;background:#c4c4c4;"></div>
<div style="left:856px;top:286px;width:23px;height:23px;background:#c8c8c8;border:2px solid #8c8c8c;"></div>
<svg style="left:860px;top:290px;" width="16" height="15" viewBox="0 0 16 15"><g opacity="1"><path d="M1.2 13.4L2.4 9.6L10.6 1.4C11.4 0.6 12.4 0.6 13.2 1.4C14 2.2 14 3.2 13.2 4L5 12.2Z M2.4 9.6L5 12.2 M9.6 2.4L12.2 5" fill="none" stroke="#b4b4b4" stroke-width="1.2" stroke-linejoin="round"/><path d="M7.4 13.8H14.6" stroke="#b4b4b4" stroke-width="1.3"/></g></svg>
<svg style="left:883px;top:288px;" width="20" height="19" viewBox="0 0 20 19"><g fill="none" stroke="#1858a8" stroke-width="1.2"><path d="M0.6 10.6V0.6H12.6V2.2"/><rect x="2.8" y="2.8" width="13" height="11.4" fill="#f4f8fc"/><path d="M5 6.2H6M7.4 6.2H13.6M5 8.6H6M7.4 8.6H13.6M5 11H6M7.4 11H11"/><path d="M2.8 4.6H15.8" stroke-width="1"/></g><circle cx="14.6" cy="13.8" r="4.2" fill="#f4f8fc" stroke="#1858a8" stroke-width="1.1"/><path d="M12.4 13.8H16.8M14.6 11.6V16" stroke="#1858a8" stroke-width="1.2"/></svg>
<svg style="left:910px;top:177px;" width="8" height="6" viewBox="0 0 8 6"><path d="M0.6 5.2L4 1.6L7.4 5.2" fill="none" stroke="#404040" stroke-width="1.8"/></svg>
<svg style="left:910px;top:420px;" width="8" height="6" viewBox="0 0 8 6"><path d="M0.6 0.8L4 4.4L7.4 0.8" fill="none" stroke="#404040" stroke-width="1.8"/></svg>
<svg style="left:83px;top:323px;" width="18" height="17" viewBox="0 0 18 17"><path d="M7.5 1.8C6 0.6 3 0.5 0.7 1.3V12.4C3 11.6 6 11.7 7.5 12.9C9 11.7 12 11.6 14.3 12.4V1.3C12 0.5 9 0.6 7.5 1.8ZM7.5 1.8V12.9" fill="none" stroke="#ffffff" stroke-width="1.3" stroke-linejoin="round"/><path d="M11.8 13.6H17.2L14.5 16.3Z" fill="#ffffff"/></svg>
<div style="left:880px;top:320px;width:1px;height:19px;background:#1a8acb;"></div>
<svg style="left:883px;top:323.6px;" width="20" height="12" viewBox="0 0 20 12"><path d="M0 1H20M0 6H20M0 11H20" stroke="#ffffff" stroke-width="1.15"/></svg>
<svg style="left:85px;top:414px;" width="16" height="16" viewBox="0 0 16 16"><path d="M6.55 5.43L6.55 0.40L9.05 0.40L9.05 5.43L13.41 2.92L14.66 5.08L10.30 7.60L14.66 10.12L13.41 12.28L9.05 9.77L9.05 14.80L6.55 14.80L6.55 9.77L2.19 12.28L0.94 10.12L5.30 7.60L0.94 5.08L2.19 2.92Z" fill="#f4f8fc" stroke="#1858a8" stroke-width="1.1" stroke-linejoin="miter"/></svg>
<div style="left:828px;top:411px;width:1px;height:21px;background:#c4c4c4;"></div>
<svg style="left:836px;top:415px;" width="13" height="14" viewBox="0 0 13 14"><path d="M12 1H1.2L7.2 7L1.2 13H12" fill="none" stroke="#1858a8" stroke-width="1.4" stroke-linejoin="miter"/></svg>
<div style="left:854px;top:411px;width:1px;height:21px;background:#c4c4c4;"></div>
<div style="left:856px;top:410px;width:23px;height:23px;background:#c8c8c8;border:2px solid #8c8c8c;"></div>
<svg style="left:860px;top:414px;" width="16" height="15" viewBox="0 0 16 15"><g opacity="1"><path d="M1.2 13.4L2.4 9.6L10.6 1.4C11.4 0.6 12.4 0.6 13.2 1.4C14 2.2 14 3.2 13.2 4L5 12.2Z M2.4 9.6L5 12.2 M9.6 2.4L12.2 5" fill="none" stroke="#b4b4b4" stroke-width="1.2" stroke-linejoin="round"/><path d="M7.4 13.8H14.6" stroke="#b4b4b4" stroke-width="1.3"/></g></svg>
<svg style="left:883px;top:412px;" width="20" height="19" viewBox="0 0 20 19"><g fill="none" stroke="#1858a8" stroke-width="1.2"><path d="M0.6 10.6V0.6H12.6V2.2"/><rect x="2.8" y="2.8" width="13" height="11.4" fill="#f4f8fc"/><path d="M5 6.2H6M7.4 6.2H13.6M5 8.6H6M7.4 8.6H13.6M5 11H6M7.4 11H11"/><path d="M2.8 4.6H15.8" stroke-width="1"/></g><circle cx="14.6" cy="13.8" r="4.2" fill="#f4f8fc" stroke="#1858a8" stroke-width="1.1"/><path d="M12.4 13.8H16.8M14.6 11.6V16" stroke="#1858a8" stroke-width="1.2"/></svg>
<svg style="left:903px;top:453px;" width="14" height="8" viewBox="0 0 14 8"><path d="M0.6 7.4L7 1L13.4 7.4" fill="none" stroke="#ffffff" stroke-width="1.2"/></svg>
<svg style="left:97px;top:602px;" width="18" height="17" viewBox="0 0 18 17"><path d="M7.5 1.8C6 0.6 3 0.5 0.7 1.3V12.4C3 11.6 6 11.7 7.5 12.9C9 11.7 12 11.6 14.3 12.4V1.3C12 0.5 9 0.6 7.5 1.8ZM7.5 1.8V12.9" fill="none" stroke="#ffffff" stroke-width="1.3" stroke-linejoin="round"/><path d="M11.8 13.6H17.2L14.5 16.3Z" fill="#ffffff"/></svg>
<svg style="left:770px;top:600px;" width="20" height="18" viewBox="0 0 20 18"><g fill="none" stroke="#ffffff" stroke-width="1.3"><path d="M5 5.3V0.7H14.5V5.3"/><rect x="0.7" y="5.3" width="18" height="7.2" rx="1.2"/><path d="M4.2 9.6H15.3V15.6H4.2Z" fill="#00adee"/></g><rect x="15" y="7" width="1.6" height="1.3" fill="#ffffff"/><path d="M13.9 14.9H19.5L16.7 18Z" fill="#ffffff"/></svg>
<svg style="left:795px;top:601px;" width="18" height="16" viewBox="0 0 18 16"><g fill="none" stroke="#ffffff" stroke-width="1.2"><rect x="0.6" y="5.6" width="3.2" height="7.8"/><rect x="5.6" y="7.6" width="3.2" height="5.8"/><path d="M10.6 13.4V0.6H13.8V12"/></g><path d="M11.3 13.2H16.9L14.1 16.3Z" fill="#ffffff"/></svg>
<svg style="left:818px;top:601px;" width="18" height="16" viewBox="0 0 18 16"><g fill="none" stroke="#ffffff" stroke-width="1.1" stroke-linejoin="round"><path d="M8 0.6L11.6 2.3V6L8 7.7L4.4 6V2.3ZM4.4 2.3L8 4L11.6 2.3M8 4V7.7"/><path d="M4.2 6.6L7.8 8.3V12L4.2 13.7L0.6 12V8.3ZM0.6 8.3L4.2 10L7.8 8.3M4.2 10V13.7"/><path d="M11.8 6.6L15.4 8.3V12L11.8 13.7L8.2 12V8.3ZM8.2 8.3L11.8 10L15.4 8.3M11.8 10V13.7"/></g><path d="M12.3 13.6H17.9L15.1 16.7Z" fill="#ffffff"/></svg>
<svg style="left:840px;top:600px;" width="19" height="18" viewBox="0 0 19 18"><g fill="none" stroke="#ffffff" stroke-width="1.2"><rect x="0.6" y="0.6" width="3.8" height="15"/><rect x="6.4" y="0.6" width="3.8" height="15" fill="#ffffff"/><path d="M12.4 15.6V0.6H16.2V13.6"/></g><path d="M12.7 14.8H18.3L15.5 17.9Z" fill="#ffffff"/></svg>
<svg style="left:864px;top:601px;" width="18" height="17" viewBox="0 0 18 17"><path d="M0.6 2.6L8.6 0.8V14.2L0.6 12.4Z" fill="none" stroke="#ffffff" stroke-width="1.1" stroke-linejoin="round"/><path d="M2.8 5L6.2 10M6.2 5L2.8 10" stroke="#ffffff" stroke-width="1.1"/><path d="M9.4 2.6H13.6V12.4H9.4M9.4 5H13.6M9.4 7.5H13.6M9.4 10H13.6M11.5 2.6V12.4" fill="none" stroke="#ffffff" stroke-width="0.9" opacity="0.85"/><path d="M11.5 14H17.1L14.3 17.1Z" fill="#ffffff"/></svg>
<div style="left:883px;top:599px;width:1px;height:19px;background:#1a8acb;"></div>
<svg style="left:886px;top:602.6px;" width="19" height="12" viewBox="0 0 19 12"><path d="M0 1H19M0 6H19M0 11H19" stroke="#ffffff" stroke-width="1.15"/></svg>
<svg style="left:99px;top:715px;" width="16" height="16" viewBox="0 0 16 16"><path d="M6.55 5.43L6.55 0.40L9.05 0.40L9.05 5.43L13.41 2.92L14.66 5.08L10.30 7.60L14.66 10.12L13.41 12.28L9.05 9.77L9.05 14.80L6.55 14.80L6.55 9.77L2.19 12.28L0.94 10.12L5.30 7.60L0.94 5.08L2.19 2.92Z" fill="#f4f8fc" stroke="#1858a8" stroke-width="1.1" stroke-linejoin="miter"/></svg>
<div style="left:831px;top:712px;width:1px;height:21px;background:#c4c4c4;"></div>
<svg style="left:838px;top:716px;" width="13" height="14" viewBox="0 0 13 14"><path d="M12 1H1.2L7.2 7L1.2 13H12" fill="none" stroke="#1858a8" stroke-width="1.4" stroke-linejoin="miter"/></svg>
<div style="left:857px;top:712px;width:1px;height:21px;background:#c4c4c4;"></div>
<svg style="left:863px;top:715px;" width="16" height="15" viewBox="0 0 16 15"><g opacity="1"><path d="M1.2 13.4L2.4 9.6L10.6 1.4C11.4 0.6 12.4 0.6 13.2 1.4C14 2.2 14 3.2 13.2 4L5 12.2Z M2.4 9.6L5 12.2 M9.6 2.4L12.2 5" fill="none" stroke="#1858a8" stroke-width="1.2" stroke-linejoin="round"/><path d="M7.4 13.8H14.6" stroke="#1858a8" stroke-width="1.3"/></g></svg>
<svg style="left:885px;top:714px;" width="20" height="19" viewBox="0 0 20 19"><g fill="none" stroke="#1858a8" stroke-width="1.2"><path d="M0.6 10.6V0.6H12.6V2.2"/><rect x="2.8" y="2.8" width="13" height="11.4" fill="#f4f8fc"/><path d="M5 6.2H6M7.4 6.2H13.6M5 8.6H6M7.4 8.6H13.6M5 11H6M7.4 11H11"/><path d="M2.8 4.6H15.8" stroke-width="1"/></g><circle cx="14.6" cy="13.8" r="4.2" fill="#f4f8fc" stroke="#1858a8" stroke-width="1.1"/><path d="M12.4 13.8H16.8M14.6 11.6V16" stroke="#1858a8" stroke-width="1.2"/></svg>
<svg style="left:190.6px;top:540.8px;" width="12" height="11" viewBox="0 0 12 11"><path d="M0.8 0.6H2.8V2.6H0.8ZM5 0.6H7V2.6H5ZM9.2 0.6H11.2V2.6H9.2Z" fill="#f4f8fc" stroke="#1858a8" stroke-width="0.9"/><path d="M0.8 5L6 10L11.2 5" fill="none" stroke="#1858a8" stroke-width="1.2"/></svg>
<svg style="left:319.6px;top:540.8px;" width="12" height="11" viewBox="0 0 12 11"><path d="M0.8 0.6H2.8V2.6H0.8ZM5 0.6H7V2.6H5ZM9.2 0.6H11.2V2.6H9.2Z" fill="#f4f8fc" stroke="#1858a8" stroke-width="0.9"/><path d="M0.8 5L6 10L11.2 5" fill="none" stroke="#1858a8" stroke-width="1.2"/></svg>
<svg style="left:383.8px;top:540.8px;" width="12" height="11" viewBox="0 0 12 11"><path d="M0.8 0.6H2.8V2.6H0.8ZM5 0.6H7V2.6H5ZM9.2 0.6H11.2V2.6H9.2Z" fill="#f4f8fc" stroke="#1858a8" stroke-width="0.9"/><path d="M0.8 5L6 10L11.2 5" fill="none" stroke="#1858a8" stroke-width="1.2"/></svg>
<svg style="left:833px;top:496.6px;" width="12" height="11" viewBox="0 0 12 11"><path d="M0.8 0.6H2.8V2.6H0.8ZM5 0.6H7V2.6H5ZM9.2 0.6H11.2V2.6H9.2Z" fill="#f4f8fc" stroke="#1858a8" stroke-width="0.9"/><path d="M0.8 5L6 10L11.2 5" fill="none" stroke="#1858a8" stroke-width="1.2"/></svg>
<svg style="left:1043px;top:730.4px;" width="12" height="11" viewBox="0 0 12 11"><path d="M0.8 0.6H2.8V2.6H0.8ZM5 0.6H7V2.6H5ZM9.2 0.6H11.2V2.6H9.2Z" fill="#f4f8fc" stroke="#1858a8" stroke-width="0.9"/><path d="M0.8 5L6 10L11.2 5" fill="none" stroke="#1858a8" stroke-width="1.2"/></svg>
<svg style="left:1155px;top:730.4px;" width="12" height="11" viewBox="0 0 12 11"><path d="M0.8 0.6H2.8V2.6H0.8ZM5 0.6H7V2.6H5ZM9.2 0.6H11.2V2.6H9.2Z" fill="#f4f8fc" stroke="#1858a8" stroke-width="0.9"/><path d="M0.8 5L6 10L11.2 5" fill="none" stroke="#1858a8" stroke-width="1.2"/></svg>
<svg style="left:1143px;top:85px;" width="14" height="8" viewBox="0 0 14 8"><path d="M0.6 7.4L7 1L13.4 7.4" fill="none" stroke="#ffffff" stroke-width="1.2"/></svg>
<svg style="left:1143px;top:394px;" width="14" height="8" viewBox="0 0 14 8"><path d="M0.6 7.4L7 1L13.4 7.4" fill="none" stroke="#ffffff" stroke-width="1.2"/></svg>
<svg style="left:1143px;top:505px;" width="14" height="8" viewBox="0 0 14 8"><path d="M0.6 7.4L7 1L13.4 7.4" fill="none" stroke="#ffffff" stroke-width="1.2"/></svg>
<svg style="left:1143px;top:616px;" width="14" height="8" viewBox="0 0 14 8"><path d="M0.6 7.4L7 1L13.4 7.4" fill="none" stroke="#ffffff" stroke-width="1.2"/></svg>
<svg style="left:1160px;top:687px;" width="14" height="8" viewBox="0 0 14 8"><path d="M0.6 7.4L7 1L13.4 7.4" fill="none" stroke="#ffffff" stroke-width="1.2"/></svg>
<svg style="left:1166px;top:82px;" width="9" height="7" viewBox="0 0 9 7"><path d="M0.8 5.8L4.5 1.8L8.2 5.8" fill="none" stroke="#404040" stroke-width="1.9"/></svg>
<svg style="left:1166px;top:663.5px;" width="9" height="7" viewBox="0 0 9 7"><path d="M0.8 1.2L4.5 5.2L8.2 1.2" fill="none" stroke="#404040" stroke-width="1.9"/></svg>
<svg style="left:1159px;top:47px;" width="15" height="15" viewBox="0 0 15 15"><path d="M5 1.6H13.4V10.2" fill="none" stroke="#ffffff" stroke-width="1.5"/><path d="M5.2 5.9H1.7V13.6H9.4V9.4" fill="none" stroke="#ffffff" stroke-width="1.5"/><path d="M5.6 9.6L10 5.2" stroke="#ffffff" stroke-width="1.3"/><path d="M11.6 3.6L7.6 4.4L10.8 7.6Z" fill="#ffffff"/></svg>
<svg style="left:1136px;top:352px;" width="16" height="18" viewBox="0 0 16 18"><path d="M3.6 8V5.2C3.6 2.8 5.4 1 7.8 1C10.2 1 12 2.8 12 5.2V8" fill="none" stroke="#3dba78" stroke-width="1.9"/><rect x="0.6" y="7.6" width="14.4" height="9.6" rx="0.8" fill="#3dba78"/></svg>
<svg style="left:896px;top:491px;" width="15" height="21" viewBox="0 0 15 21"><rect x="0.2" y="0.2" width="14.6" height="20.8" rx="0.6" fill="#43bf7c"/><rect x="2" y="2.1" width="10.9" height="3.7" fill="#f6fbf8"/><rect x="2" y="8.2" width="2.7" height="2.7" fill="#f6fbf8"/><rect x="6.1" y="8.2" width="2.7" height="2.7" fill="#f6fbf8"/><rect x="10.2" y="8.2" width="2.7" height="2.7" fill="#f6fbf8"/><rect x="2" y="12.3" width="2.7" height="2.7" fill="#f6fbf8"/><rect x="6.1" y="12.3" width="2.7" height="2.7" fill="#f6fbf8"/><rect x="2" y="16.4" width="2.7" height="2.7" fill="#f6fbf8"/><rect x="6.1" y="16.4" width="2.7" height="2.7" fill="#f6fbf8"/><rect x="10.2" y="12.3" width="2.7" height="6.8" fill="#f6fbf8"/></svg>
<svg style="left:24px;top:76px;" width="28" height="17" viewBox="0 0 28 17"><circle cx="7.8" cy="5.4" r="4.2" fill="none" stroke="#1858a8" stroke-width="1.7"/><path d="M1.5999999999999996 15.6C1.5999999999999996 10.399999999999999 4.699999999999999 9.8 7.8 9.8C10.9 9.8 14.0 10.399999999999999 14.0 15.6" fill="none" stroke="#1858a8" stroke-width="1.7" stroke-linecap="round"/><path d="M16 5H26.6M16 8.5H26.6M16 12H26.6" fill="none" stroke="#1858a8" stroke-width="1.7" /></svg>
<svg style="left:72px;top:71px;" width="17" height="12" viewBox="0 0 17 12"><rect x="0.5" y="0.8" width="8.4" height="9.8" fill="#3c74bd" stroke="#1858a8" stroke-width="1"/><path d="M2.4 1.5V7.2M4.7 1.5V7.2M7 1.5V7.2M1.2 7.6H8.2" stroke="#dfe9f6" stroke-width="0.9"/><path d="M10.2 3.3H16.6M10.2 5.4H16.6M10.2 7.5H16.6" fill="none" stroke="#1858a8" stroke-width="1.1" /></svg>
<svg style="left:72px;top:95px;" width="17" height="11" viewBox="0 0 17 11"><circle cx="4.6" cy="3.2" r="2.7" fill="none" stroke="#1858a8" stroke-width="1.2"/><path d="M0.7999999999999998 9.6C0.7999999999999998 4.3999999999999995 2.6999999999999997 6.1000000000000005 4.6 6.1000000000000005C6.5 6.1000000000000005 8.399999999999999 4.3999999999999995 8.399999999999999 9.6" fill="none" stroke="#1858a8" stroke-width="1.2" stroke-linecap="round"/><path d="M10.6 6.6H16.6" fill="none" stroke="#1858a8" stroke-width="1.3" /><path d="M11.6 6.2V4.6M13.6 6.2V3.4M15.6 6.2V2.2" fill="none" stroke="#1858a8" stroke-width="1.2" /></svg>
<svg style="left:74px;top:116px;" width="14" height="15" viewBox="0 0 14 15"><path d="M2.6 12.6V14H12.8V2.6H11.4" fill="none" stroke="#1858a8" stroke-width="1.1" opacity="0.8"/><rect x="0.6" y="0.6" width="10.2" height="11.6" fill="#f3f7fc" stroke="#1858a8" stroke-width="1.1"/><path d="M2.4 3.4H3.4M4.6 3.4H9M2.4 5.8H3.4M4.6 5.8H9M2.4 8.2H3.4M4.6 8.2H9" fill="none" stroke="#1858a8" stroke-width="1.1" /></svg>
<svg style="left:199px;top:70px;" width="11" height="14" viewBox="0 0 11 14"><path d="M0.6 0.6H6.8L10.4 4.2V13H0.6Z M6.8 0.6V4.2H10.4" fill="none" stroke="#1858a8" stroke-width="1.1" stroke-linejoin="round"/><path d="M3.2 10.6V7.4M5.4 10.6V5.6M7.6 10.6V8.4" fill="none" stroke="#1858a8" stroke-width="1.2" /></svg>
<svg style="left:198.5px;top:94px;" width="12" height="12" viewBox="0 0 12 12"><path d="M0.6 3.4V11H11.2V3.4M0.6 3.4H11.2V0.8Q11.2 0.6 11 0.6H0.8Q0.6 0.6 0.6 0.8Z" fill="none" stroke="#1858a8" stroke-width="1.1" /><path d="M4.2 5.4H7.6" fill="none" stroke="#1858a8" stroke-width="1.2" /><path d="M5.9 0.6V3.4" fill="none" stroke="#1858a8" stroke-width="0.9" /></svg>
<svg style="left:312px;top:70px;" width="13" height="13" viewBox="0 0 13 13"><path d="M0.6 0.6H7.4V4.6M4.6 7.4H0.6V0.6" fill="none" stroke="#1858a8" stroke-width="1.1" /><rect x="4.8" y="4.8" width="7.6" height="7.6" fill="#f3f7fc" stroke="#1858a8" stroke-width="1.1"/><path d="M2.2 2.2L4.4 4.4M2.2 4V2.2H4" fill="none" stroke="#1858a8" stroke-width="0.9" /><path d="M7.2 7.2L10.2 10.2M10.2 8.2V10.2H8.2" fill="none" stroke="#1858a8" stroke-width="0.9" /></svg>
<svg style="left:312.5px;top:93.5px;" width="13" height="12" viewBox="0 0 13 12"><circle cx="6" cy="5.8" r="5.1" fill="none" stroke="#1858a8" stroke-width="1.25" stroke-dasharray="13 3.2"/><circle cx="6" cy="5.8" r="2.5" fill="none" stroke="#1858a8" stroke-width="1.1" stroke-dasharray="11.5 4.2"/><path d="M9.4 9.2L11.6 11.4" fill="none" stroke="#1858a8" stroke-width="1.6" /><path d="M0.6 1.4L2.4 0.4" fill="none" stroke="#1858a8" stroke-width="1.3" /></svg>
<svg style="left:312.5px;top:117px;" width="12" height="12" viewBox="0 0 12 12"><path d="M0.6 2.2V10.6H8M3 0.6H10.8V7.6" fill="none" stroke="#1858a8" stroke-width="1.1" /><path d="M7.6 3.6H4L6 5.7L4 7.8H7.6" fill="none" stroke="#1858a8" stroke-width="1" /><path d="M8.6 8.6L11.2 11.2M11.2 9V11.2H9" fill="none" stroke="#1858a8" stroke-width="1.1" /><path d="M0.6 0.6L2 2" fill="none" stroke="#1858a8" stroke-width="1.1" /></svg>
<svg style="left:450px;top:74px;" width="23" height="25" viewBox="0 0 23 25"><path d="M10 20.4H0.9V0.9H16V9.6" fill="none" stroke="#1858a8" stroke-width="1.8" /><path d="M3.4 4H8.4M3.4 6.6H9.8" fill="none" stroke="#1858a8" stroke-width="1.5" /><text x="3.6" y="18" font-family="Liberation Sans,sans-serif" font-size="10.5" font-weight="bold" fill="#1858a8">$</text><rect x="11.9" y="10.7" width="9.2" height="12.4" fill="#fcfcfc" stroke="#1858a8" stroke-width="1.8"/><path d="M14.2 14H18.8" fill="none" stroke="#1858a8" stroke-width="1.5" /><path d="M14.4 17.2H15.8M17.2 17.2H18.6M14.4 20H15.8M17.2 20H18.6" fill="none" stroke="#1858a8" stroke-width="1.5" /></svg>
<svg style="left:499px;top:70px;" width="11" height="13" viewBox="0 0 11 13"><path d="M0.6 10.6V1.6Q0.6 0.6 1.6 0.6H10.2V10.4" fill="none" stroke="#1858a8" stroke-width="1.1" /><path d="M10.2 10.4H2Q0.6 10.4 0.6 11.4Q0.6 12.4 2 12.4H10.2" fill="none" stroke="#1858a8" stroke-width="1.1" /><text x="3.6" y="8.4" font-family="Liberation Sans,sans-serif" font-size="6.5" font-weight="bold" fill="#1858a8">$</text></svg>
<svg style="left:614px;top:74px;" width="18" height="21" viewBox="0 0 18 21"><rect x="0.9" y="0.9" width="15.4" height="19" fill="none" stroke="#1858a8" stroke-width="1.8"/><path d="M3.8 5.2H13.4" fill="none" stroke="#1858a8" stroke-width="1.5" /><path d="M3.8 8.6H7.4M10 8.6H13.4M3.8 12H6.4M9 12H13.4M3.8 15.4H7.4M10 15.4H13.4" fill="none" stroke="#1858a8" stroke-width="1.5" /></svg>
<svg style="left:674px;top:74px;" width="25" height="25" viewBox="0 0 25 25"><path d="M9.6 19.4H0.9V0.9H19.6V9.4" fill="none" stroke="#1858a8" stroke-width="1.8" /><path d="M0.9 4.6H19.6" fill="none" stroke="#1858a8" stroke-width="1.4" /><path d="M3 2.8H4.2M5.4 2.8H6.6M7.8 2.8H9" fill="none" stroke="#1858a8" stroke-width="1.2" /><path d="M4 9H5.4M6.8 9H10.4M4 12.4H5.4M6.8 12.4H8.6" fill="none" stroke="#1858a8" stroke-width="1.4" /><circle cx="17" cy="17" r="3.6" fill="#fcfcfc" stroke="#1858a8" stroke-width="1.8"/><path d="M20.90 17.00L23.20 17.00M19.76 19.76L21.38 21.38M17.00 20.90L17.00 23.20M14.24 19.76L12.62 21.38M13.10 17.00L10.80 17.00M14.24 14.24L12.62 12.62M17.00 13.10L17.00 10.80M19.76 14.24L21.38 12.62" fill="none" stroke="#1858a8" stroke-width="1.9" /></svg>
<svg style="left:705.5px;top:125.5px;" width="6" height="4" viewBox="0 0 6 4"><path d="M0 0H6L3 3.4Z" fill="#1858a8"/></svg>
<svg style="left:726px;top:70px;" width="13" height="13" viewBox="0 0 13 13"><rect x="0.6" y="0.6" width="11.8" height="11.8" fill="none" stroke="#1858a8" stroke-width="1.2"/><text x="2" y="10.4" font-family="Liberation Sans,sans-serif" font-size="10" font-weight="bold" fill="#1858a8" textLength="9" lengthAdjust="spacingAndGlyphs">%</text></svg>
<svg style="left:748.5px;top:69.5px;" width="17" height="17" viewBox="0 0 17 17"><circle cx="7" cy="7" r="4.8" fill="none" stroke="#1858a8" stroke-width="1.1"/><circle cx="7" cy="7" r="2.2" fill="none" stroke="#1858a8" stroke-width="1.1"/><path d="M12.20 7.00L13.80 7.00M11.50 9.60L12.89 10.40M9.60 11.50L10.40 12.89M7.00 12.20L7.00 13.80M4.40 11.50L3.60 12.89M2.50 9.60L1.11 10.40M1.80 7.00L0.20 7.00M2.50 4.40L1.11 3.60M4.40 2.50L3.60 1.11M7.00 1.80L7.00 0.20M9.60 2.50L10.40 1.11M11.50 4.40L12.89 3.60" fill="none" stroke="#1858a8" stroke-width="1.3" /><path d="M11.4 14H16.4L13.9 16.6Z" fill="#1858a8"/></svg>
<svg style="left:772.5px;top:69.5px;" width="16" height="16" viewBox="0 0 16 16"><path d="M0.6 13.6V0.6H6.4L9.8 4V7 M6.4 0.6V4H9.8" fill="none" stroke="#1858a8" stroke-width="1.1" stroke-linejoin="round"/><path d="M2.6 6.4H3.6M4.6 6.4H7.4M2.6 8.8H3.6M4.6 8.8H6.4M2.6 11.2H3.6" fill="none" stroke="#1858a8" stroke-width="1" /><path d="M0.6 13.6H5" fill="none" stroke="#1858a8" stroke-width="1.1" /><path d="M6.4 9V12.4H13.4" fill="none" stroke="#1858a8" stroke-width="1.2" /><path d="M11.4 9.4L15 12.4L11.4 15.4Z" fill="#1858a8"/></svg>
<svg style="left:794px;top:69px;" width="15" height="15" viewBox="0 0 15 15"><circle cx="7.5" cy="7.5" r="6.7" fill="none" stroke="#1858a8" stroke-width="1.1" transform="rotate(-90 7.5 7.5)" stroke-dasharray="24 1.7 1.3 1.7 1.3 1.7 1.3 1.7 1.3 1.7 1.3 1.7 1.3 1.7 1.3"/><rect x="5.3" y="7.2" width="4.4" height="3.4" fill="none" stroke="#1858a8" stroke-width="1.1"/><path d="M6.2 7.2V6Q6.2 4.7 7.5 4.7Q8.8 4.7 8.8 6V7.2" fill="none" stroke="#1858a8" stroke-width="1" /></svg>
<svg style="left:726.5px;top:92.5px;" width="16" height="17" viewBox="0 0 16 17"><rect x="0.6" y="0.6" width="10.4" height="12.6" fill="none" stroke="#1858a8" stroke-width="1.1"/><path d="M2.4 3.4H3.4M4.6 3.4H9M2.4 5.8H3.4M4.6 5.8H9M2.4 8.2H3.4M4.6 8.2H7" fill="none" stroke="#1858a8" stroke-width="1" /><circle cx="11" cy="12" r="3.8" fill="#fcfcfc" stroke="#1858a8" stroke-width="1.1"/></svg>
<svg style="left:772.5px;top:92.5px;" width="16" height="17" viewBox="0 0 16 17"><path d="M0.6 13.6V0.6H6.4L9.8 4V7 M6.4 0.6V4H9.8" fill="none" stroke="#1858a8" stroke-width="1.1" stroke-linejoin="round"/><path d="M2.6 6.4H3.6M4.6 6.4H7.4M2.6 8.8H3.6M4.6 8.8H6.4M2.6 11.2H3.6" fill="none" stroke="#1858a8" stroke-width="1" /><path d="M0.6 13.6H6" fill="none" stroke="#1858a8" stroke-width="1.1" /><circle cx="10.6" cy="12" r="3.9" fill="#fcfcfc" stroke="#1858a8" stroke-width="1.1"/><path d="M9 10.4L12.2 13.6M12.2 10.4L9 13.6" fill="none" stroke="#1858a8" stroke-width="1.1" /></svg>
<div class="t " style="top:112px;height:18px;line-height:18px;left:727.5px;font-size:15px;color:#1858a8;transform:none;">Z</div>
<svg style="left:724px;top:130px;" width="17" height="2" viewBox="0 0 17 2"><path d="M0 1H17" stroke="#1858a8" stroke-width="1.5" stroke-dasharray="2.4 1"/></svg>
<svg style="left:771.2px;top:115.2px;" width="15" height="15" viewBox="0 0 15 15"><circle cx="7.5" cy="7.5" r="6.7" fill="none" stroke="#1858a8" stroke-width="1.1" transform="rotate(-90 7.5 7.5)" stroke-dasharray="24 1.7 1.3 1.7 1.3 1.7 1.3 1.7 1.3 1.7 1.3 1.7 1.3 1.7 1.3"/><rect x="5.3" y="7.2" width="4.4" height="3.4" fill="none" stroke="#1858a8" stroke-width="1.1"/><path d="M6.2 7.2V6Q6.2 4.7 7.5 4.7Q8.8 4.7 8.8 6V7.2" fill="none" stroke="#1858a8" stroke-width="1" /></svg>
<div class="t " style="top:82.5px;height:24px;line-height:24px;left:838px;font-size:20px;color:#1858a8;transform:none;">R</div>
<svg style="left:832px;top:105.7px;" width="24" height="2" viewBox="0 0 24 2"><path d="M0 1H24" stroke="#1858a8" stroke-width="1.5" stroke-dasharray="2.6 1"/></svg>
<svg style="left:860.3px;top:145.3px;" width="7" height="4" viewBox="0 0 7 4"><path d="M0 0H6.4L3.2 3.4Z" fill="#1858a8"/></svg>
<svg style="left:914px;top:145px;" width="10" height="6" viewBox="0 0 10 6"><path d="M0.6 5.4L5 1L9.4 5.4" fill="none" stroke="#333" stroke-width="1.1"/></svg>
</body></html>
